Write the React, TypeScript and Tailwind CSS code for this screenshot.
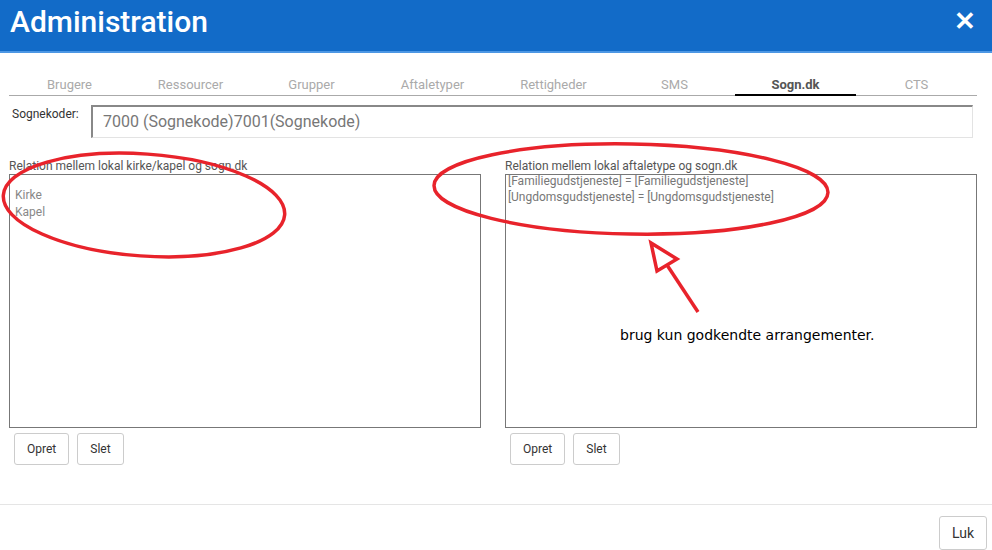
import React from "react";

const tabs = ["Brugere", "Ressourcer", "Grupper", "Aftaletyper", "Rettigheder", "SMS", "Sogn.dk", "CTS"];

function Btn({ children }: { children: React.ReactNode }) {
  return (
    <button className="h-[32px] px-[12px] border border-[#cccccc] rounded-[3px] bg-white text-[12px] text-[#333] leading-none">
      {children}
    </button>
  );
}

export default function App() {
  return (
    <div className="relative w-[992px] h-[550px] bg-white overflow-hidden" style={{ fontFamily: "Roboto, 'Liberation Sans', sans-serif" }}>
      <div className="h-[53px] bg-[#126bc8] border-b-2 border-[#4d97e4] flex items-center justify-between pl-[10px] pr-[16px]">
        <h1 className="text-white text-[30px] font-medium leading-none -mt-[8px]">Administration</h1>
        <span className="text-white text-[26px] font-bold leading-none -mt-[10px]">✕</span>
      </div>

      <div className="ml-[9px] mr-[15px] mt-[24px] flex border-b border-[#aaaaaa]">
        {tabs.map((t) => (
          <div
            key={t}
            className={
              t === "Sogn.dk"
                ? "flex-1 text-center text-[13px] font-bold text-[#555] pb-[1px] border-b-2 border-black -mb-px leading-[16px]"
                : "flex-1 text-center text-[13px] text-[#aaaaaa] pb-[2px] leading-[16px]"
            }
          >
            {t}
          </div>
        ))}
      </div>

      <div className="flex items-start mt-[9px] pl-[12px] pr-[19px]">
        <span className="text-[12px] text-[#333] w-[79px] pt-[2px] leading-[14px]">Sognekoder:</span>
        <div className="flex-1 h-[33px] border-t-2 border-l-2 border-r border-b border-t-[#888] border-l-[#888] border-r-[#e3e3e3] border-b-[#e3e3e3] flex items-center pl-[10px] text-[16px] text-[#777]">
          7000 (Sognekode)7001(Sognekode)
        </div>
      </div>

      <div className="flex mt-[21px] pl-[9px] pr-[15px] gap-[24px]">
        <div className="flex-1 flex flex-col">
          <span className="text-[12px] text-[#555] leading-[14px] mb-[1px]">Relation mellem lokal kirke/kapel og sogn.dk</span>
          <div className="h-[254px] border border-[#777] px-[5px] pt-[12px] text-[12px] text-[#888] leading-[17px]">
            <div>Kirke</div>
            <div>Kapel</div>
          </div>
          <div className="flex gap-[8px] pl-[5px] mt-[5px]">
            <Btn>Opret</Btn>
            <Btn>Slet</Btn>
          </div>
        </div>
        <div className="flex-1 flex flex-col">
          <span className="text-[12px] text-[#555] leading-[14px] mb-[1px]">Relation mellem lokal aftaletype og sogn.dk</span>
          <div className="h-[254px] border border-[#777] px-[2px] text-[12px] text-[#777] leading-[16px]">
            <div className="-mt-[2px]">[Familiegudstjeneste] = [Familiegudstjeneste]</div>
            <div>[Ungdomsgudstjeneste] = [Ungdomsgudstjeneste]</div>
          </div>
          <div className="flex gap-[8px] pl-[5px] mt-[5px]">
            <Btn>Opret</Btn>
            <Btn>Slet</Btn>
          </div>
        </div>
      </div>

      <div className="absolute left-0 right-0 top-[504px] border-t border-[#e5e5e5] flex justify-end pr-[5px] pt-[11px]">
        <button className="h-[34px] w-[48px] border border-[#cccccc] rounded-[3px] bg-white text-[14px] text-[#333]">Luk</button>
      </div>

      <svg className="absolute inset-0 pointer-events-none" width="992" height="550" viewBox="0 0 992 550">
        <ellipse cx="144" cy="205" rx="141" ry="51" transform="rotate(4 144 205)" fill="none" stroke="#e8232b" strokeWidth="3.5" />
        <ellipse cx="631" cy="189" rx="197" ry="45" transform="rotate(1 631 189)" fill="none" stroke="#e8232b" strokeWidth="3.5" />
        <polygon points="651,243 657,271 677,259" fill="none" stroke="#e8232b" strokeWidth="3.5" strokeLinejoin="miter" />
        <line x1="667" y1="265" x2="698" y2="312" stroke="#e8232b" strokeWidth="3.5" />
      </svg>
      <div className="absolute left-[620px] top-[327px] text-black text-[14px] leading-[17px]" style={{ fontFamily: "'DejaVu Sans', sans-serif" }}>
        brug kun godkendte arrangementer.
      </div>
    </div>
  );
}
